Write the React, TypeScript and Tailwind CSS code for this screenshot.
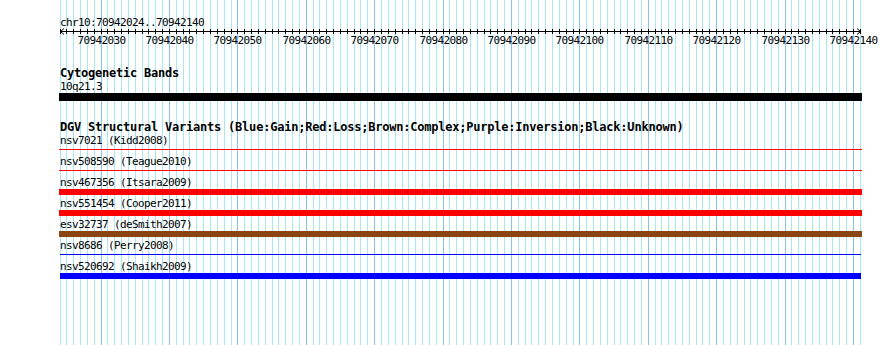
import React from 'react'

// 70942024..70942140, 117 bases over ~801px
const START = 70942024
const BASES = 117
const PX = 6.84
const X0 = 60

const bx = (i: number) => Math.floor(X0 + i * PX) + 0.5

type Variant = { name: string; color: string; thin?: boolean }

const variants: Variant[] = [
  { name: 'nsv7021 (Kidd2008)', color: '#ff0000', thin: true },
  { name: 'nsv508590 (Teague2010)', color: '#ff0000', thin: true },
  { name: 'nsv467356 (Itsara2009)', color: '#ff0000' },
  { name: 'nsv551454 (Cooper2011)', color: '#ff0000' },
  { name: 'esv32737 (deSmith2007)', color: '#8b4513' },
  { name: 'nsv8686 (Perry2008)', color: '#0000ff', thin: true },
  { name: 'nsv520692 (Shaikh2009)', color: '#0000ff' },
]

const mono = { fontFamily: '"DejaVu Sans Mono", "Liberation Mono", monospace' }

function Grid() {
  const lines = []
  for (let i = 0; i <= BASES; i++) {
    const major = (START + i) % 10 === 0
    lines.push(
      <line key={i} x1={bx(i)} x2={bx(i)} y1={0} y2={345}
        stroke={major ? '#86c4ec' : '#a8e8f0'} strokeWidth={1} />
    )
  }
  return (
    <svg className="absolute inset-0 pointer-events-none" width={890} height={345}>
      {lines}
    </svg>
  )
}

function Ruler() {
  const ticks = []
  const labels = []
  for (let i = 0; i <= BASES; i++) {
    ticks.push(<line key={i} x1={bx(i) - X0} x2={bx(i) - X0} y1={0} y2={5} stroke="#000" />)
    if ((START + i) % 10 === 0) {
      labels.push(
        <text key={i} x={bx(i) - X0} y={15} textAnchor="middle" fontSize={11}
          style={{ ...mono, letterSpacing: '-0.62px' }} fill="#000">{START + i}</text>
      )
    }
  }
  return (
    <svg width={830} height={17} className="block overflow-visible">
      <line x1={0} x2={801} y1={2.5} y2={2.5} stroke="#000" />
      <polyline points="4,-0.5 0.5,2.5 4,5.5" fill="none" stroke="#000" />
      <polyline points="797,-0.5 800.5,2.5 797,5.5" fill="none" stroke="#000" />
      {ticks}
      {labels}
    </svg>
  )
}

export default function App() {
  return (
    <div className="relative w-[890px] h-[345px] bg-white overflow-hidden text-black" style={mono}>
      <Grid />
      <div className="relative pl-[60px] pt-[16px]">
        <div className="text-[11px] leading-[13px] tracking-[-0.62px] whitespace-pre">chr10:70942024..70942140</div>
        <Ruler />

        <div className="mt-[21px] text-[12px] leading-[13px] font-bold tracking-[-0.22px] whitespace-pre">Cytogenetic Bands</div>
        <div className="text-[11px] leading-[13px] tracking-[-0.62px] whitespace-pre">10q21.3</div>
        <div className="h-[8px] -ml-px w-[803px] bg-black" />

        <div className="mt-[20px] text-[12px] leading-[13px] font-bold tracking-[-0.22px] whitespace-pre">
          DGV Structural Variants (Blue:Gain;Red:Loss;Brown:Complex;Purple:Inversion;Black:Unknown)
        </div>
        {variants.map(v => (
          <div key={v.name}>
            <div className="text-[11px] leading-[13px] tracking-[-0.62px] whitespace-pre">{v.name}</div>
            <div className={`h-[8px] ${v.thin ? 'pt-[2px]' : ''}`}>
              <div
                className={`${v.thin ? 'h-px' : 'h-[6px]'} ${v.color === '#0000ff' ? 'w-[801px]' : '-ml-px w-[803px]'}`}
                style={{ background: v.color }}
              />
            </div>
          </div>
        ))}
      </div>
    </div>
  )
}
